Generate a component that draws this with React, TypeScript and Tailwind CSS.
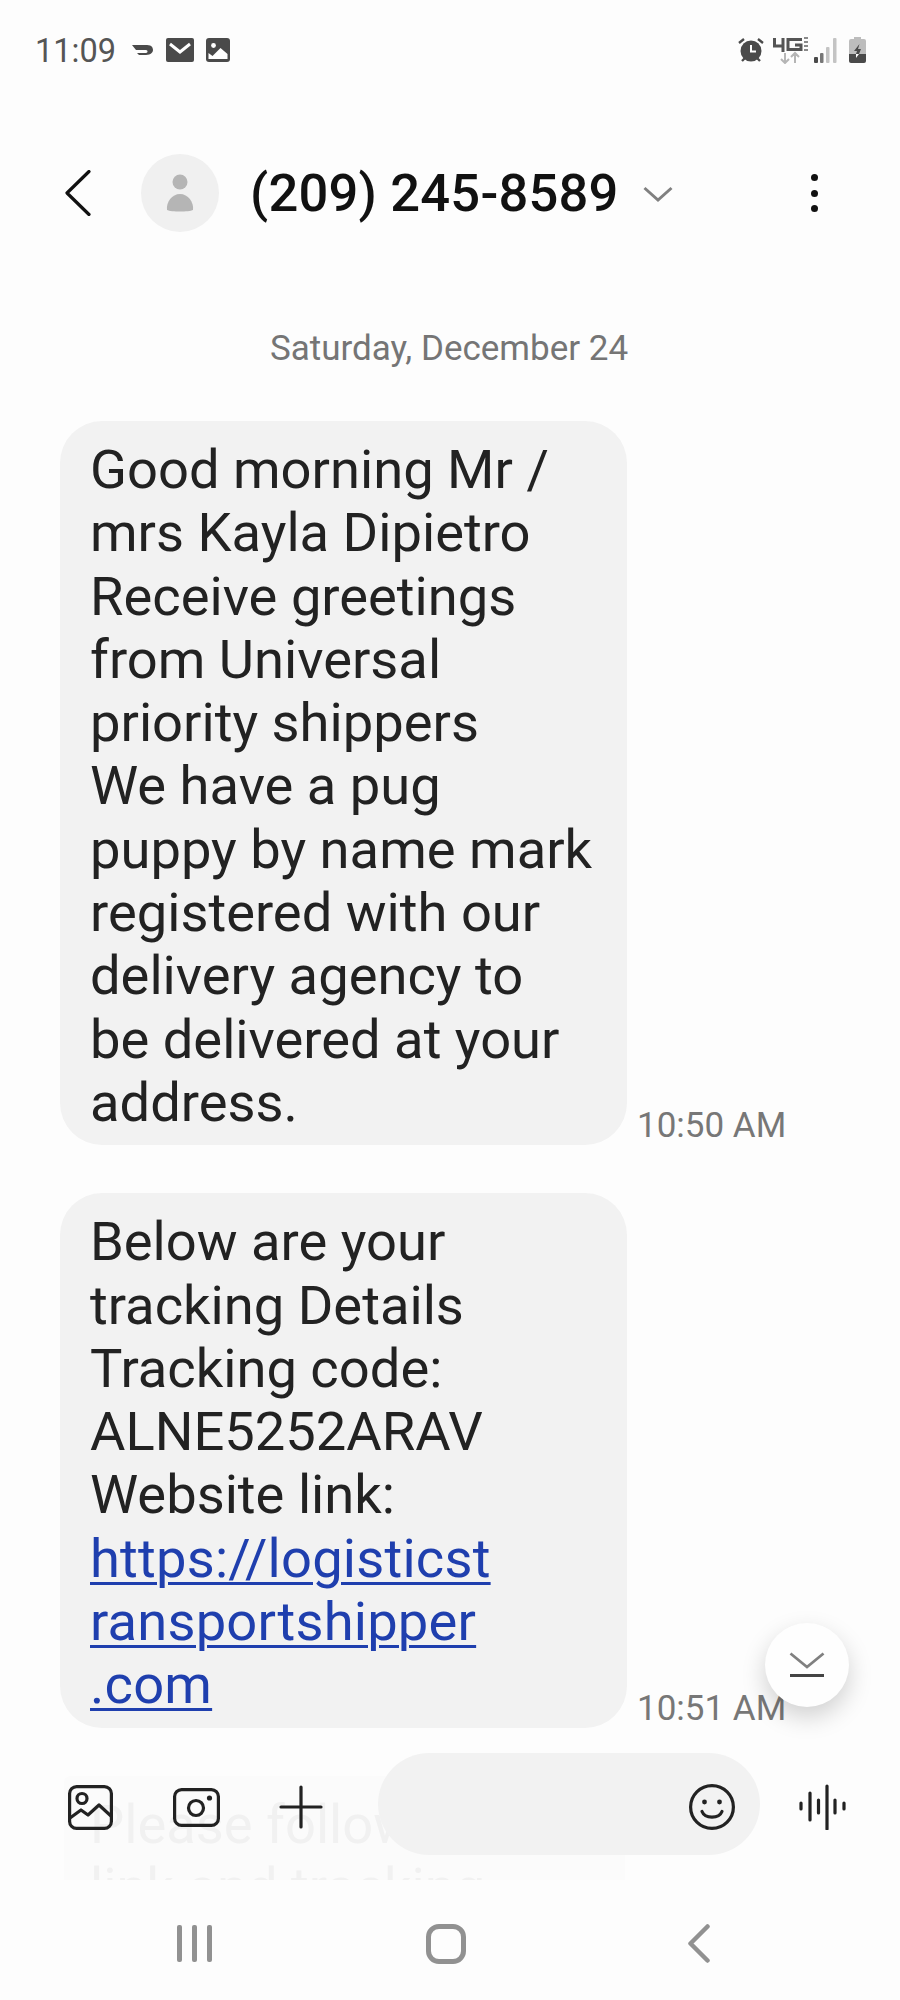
const FONT = "font-['Roboto','Liberation_Sans',sans-serif]";

function Row({ lines }: { lines: string[] }) {
  return (
    <>
      {lines.map((l) => (
        <div key={l}>{l}</div>
      ))}
    </>
  );
}

function Message({ lines, link, time }: { lines: string[]; link?: string[]; time: string }) {
  return (
    <div className="flex items-end">
      <div className="w-[567px] rounded-[42px] bg-[#f2f2f2] pl-[30px] pr-[20px] pt-[17px] pb-[11px] text-[54.3px] leading-[63.3px] text-[#222222]">
        <Row lines={lines} />
        {link && (
          <div className="text-[#1f3fae] underline decoration-[3px] underline-offset-[5px] tracking-[0.2px]">
            <Row lines={link} />
          </div>
        )}
      </div>
      <span className="ml-[10px] mb-[-1px] text-[35px] leading-[40px] text-[#777777]">{time}</span>
    </div>
  );
}

function StatusBar() {
  return (
    <div className="flex h-[100px] items-center pl-[35px] pr-[34px]">
      <span className="mt-[1px] text-[32.5px] leading-[38px] text-[#555555]">11:09</span>
      <svg className="ml-[15px]" width="24" height="14" viewBox="0 0 24 14" fill="none">
        <path d="M1 2h15c5 0 6 3 6 5s-2 5-7 5H8l-2-2h9c2 0 2-3 0-3H5Z" fill="#4a4a4a" />
      </svg>
      <svg className="ml-[11px]" width="28" height="24" viewBox="0 0 28 24">
        <rect width="28" height="24" rx="2" fill="#4a4a4a" />
        <path d="M4 6l10 8 10-8" stroke="#fff" strokeWidth="3" fill="none" />
      </svg>
      <svg className="ml-[12px]" width="24" height="24" viewBox="0 0 24 24">
        <rect width="24" height="24" rx="3" fill="#4a4a4a" />
        <circle cx="7.5" cy="7.5" r="2.4" fill="#fff" />
        <path d="M2.5 21v-6l4 3 8-8 7 6v5Z" fill="#fff" />
      </svg>
      <div className="flex-1" />
      <svg width="26" height="26" viewBox="0 0 26 26">
        <circle cx="13" cy="14" r="10.5" fill="#4a4a4a" />
        <path d="M13 8v6.5h5" stroke="#fff" strokeWidth="2" fill="none" />
        <path d="M1 6l5-4M25 6l-5-4M4 24l3-3M22 24l-3-3" stroke="#4a4a4a" strokeWidth="2.4" />
      </svg>
      <svg className="ml-[8px]" width="36" height="27" viewBox="0 0 36 27">
        <path d="M2.500 1v8h10M11 1v14" stroke="#555555" strokeWidth="3" fill="none" />
        <path d="M30 2.500H16v10h13V8h-6" stroke="#555555" strokeWidth="3" fill="none" />
        <path d="M32 1h4M32 5h4M32 9h4M32 13h4" stroke="#8a8a8a" strokeWidth="1.800" />
        <path d="M13 16v10M9 22l4 4 4-4M23 26V16M19 20l4-4 4 4" stroke="#b5b5b5" strokeWidth="2" fill="none" />
      </svg>
      <svg className="ml-[6px]" width="23" height="25" viewBox="0 0 23 25">
        <rect x="0" y="19" width="4" height="6" rx="1" fill="#4a4a4a" />
        <rect x="6" y="15" width="3.500" height="10" rx="1" fill="#777777" />
        <rect x="12" y="9" width="3.500" height="16" rx="1" fill="#c4c4c4" />
        <rect x="19" y="0" width="3.500" height="25" rx="1" fill="#c4c4c4" />
      </svg>
      <svg className="ml-[12px]" width="17" height="26" viewBox="0 0 17 26">
        <path d="M5 0h7v2h3a2 2 0 0 1 2 2v13H0V4a2 2 0 0 1 2-2h3Z" fill="#bdbdbd" />
        <path d="M0 17h17v7a2 2 0 0 1-2 2H2a2 2 0 0 1-2-2Z" fill="#4a4a4a" />
        <path d="M10.500 7 5 14h3l-1 3h3l2-5H9Z" fill="#4a4a4a" />
        <path d="M7 17h3l-3 4Z" fill="#fff" />
      </svg>
    </div>
  );
}

function Header() {
  return (
    <div className="flex h-[86px] items-center pl-[65px] mt-[50px]">
      <svg width="26" height="46" viewBox="0 0 26 46" fill="none">
        <path d="M24 1.500 2 23l22 21.500" stroke="#111111" strokeWidth="3.200" strokeLinecap="round" strokeLinejoin="round" />
      </svg>
      <div className="ml-[50px] flex h-[78px] w-[78px] items-center justify-center rounded-full bg-[#f0f0f0]">
        <svg width="28" height="38" viewBox="0 0 28 38">
          <circle cx="14" cy="8" r="7.500" fill="#b5b5b5" />
          <path d="M1 36c-1-8 5-16 13-16s14 8 13 16c-4 2-22 2-26 0Z" fill="#b5b5b5" />
        </svg>
      </div>
      <span className="ml-[31px] text-[52.5px] font-medium leading-[60px] text-[#111111] tracking-[0.2px]">(209) 245-8589</span>
      <svg className="ml-[24px] mt-[2px]" width="30" height="17" viewBox="0 0 30 17" fill="none">
        <path d="M1.500 2 15 14 28.500 2" stroke="#808080" strokeWidth="3" />
      </svg>
      <div className="ml-[138px] flex flex-col gap-[8.500px]">
        <span className="h-[7px] w-[7px] rounded-full bg-[#111111]" />
        <span className="h-[7px] w-[7px] rounded-full bg-[#111111]" />
        <span className="h-[7px] w-[7px] rounded-full bg-[#111111]" />
      </div>
    </div>
  );
}

function ComposeBar() {
  return (
    <div className="absolute left-0 top-[1753px] flex h-[102px] w-[900px] items-center">
      <svg className="ml-[68px] mt-[6px]" width="45" height="45" viewBox="0 0 45 45" fill="none" stroke="#222222" strokeWidth="3.200">
        <rect x="1.600" y="1.600" width="41.800" height="41.800" rx="7" />
        <circle cx="14" cy="13.500" r="5" />
        <path d="M2 33l11-8 7 5 11-10 12 11" strokeLinejoin="round" />
      </svg>
      <svg className="ml-[60px] mt-[6px]" width="47" height="39" viewBox="0 0 47 39" fill="none" stroke="#222222" strokeWidth="3.200">
        <rect x="1.600" y="1.600" width="43.800" height="35.800" rx="7" />
        <circle cx="23" cy="20" r="7.500" />
        <circle cx="36.500" cy="10" r="2.600" fill="#222222" stroke="none" />
      </svg>
      <svg className="ml-[59px] mt-[6px]" width="44" height="44" viewBox="0 0 44 44" fill="none" stroke="#222222" strokeWidth="3.200" strokeLinecap="round">
        <path d="M22 2v40M2 22h40" />
      </svg>
      <div className="ml-[55px] flex h-[102px] w-[382px] items-center justify-end rounded-full bg-[#f2f2f2] pr-[25px] pt-[6px]">
        <svg width="46" height="46" viewBox="0 0 46 46" fill="none" stroke="#222222" strokeWidth="3.200">
          <circle cx="23" cy="23" r="21.400" />
          <circle cx="15.500" cy="18" r="2.400" fill="#222222" stroke="none" />
          <circle cx="30.500" cy="18" r="2.400" fill="#222222" stroke="none" />
          <path d="M13 27.500c3 7.500 17 7.500 20 0" strokeLinecap="round" />
        </svg>
      </div>
      <svg className="ml-[39px] mt-[6px]" width="48" height="46" viewBox="0 0 48 46" fill="none" stroke="#222222" strokeWidth="3.200" strokeLinecap="round">
        <path d="M2 19v6M11 9v27M19.500 16v13M28 2v43M36 16v13M45 19v6" />
      </svg>
    </div>
  );
}

function ScrollButton() {
  return (
    <div className="absolute left-[765px] top-[1623px] flex h-[84px] w-[84px] items-center justify-center rounded-full bg-[#fefefe] shadow-[0_10px_24px_rgba(0,0,0,0.18)]">
      <svg width="36" height="26" viewBox="0 0 36 26" fill="none">
        <path d="M1.500 1.500 18 15 34.500 1.500" stroke="#808080" strokeWidth="2.800" />
        <path d="M1 23.500h34" stroke="#444444" strokeWidth="3.200" />
      </svg>
    </div>
  );
}

function NavBar() {
  return (
    <div className="flex h-[120px] items-start pt-[44px] pl-[177px]">
      <div className="mt-[1px] flex gap-[10px]">
        <span className="h-[37px] w-[5px] rounded-[2px] bg-[#919191]" />
        <span className="h-[37px] w-[5px] rounded-[2px] bg-[#919191]" />
        <span className="h-[37px] w-[5px] rounded-[2px] bg-[#919191]" />
      </div>
      <div className="ml-[214px] h-[40px] w-[40px] rounded-[13px] border-[5px] border-[#919191]" />
      <svg className="ml-[221px]" width="23" height="39" viewBox="0 0 23 39" fill="none">
        <path d="M20.500 2.500 3.500 19.500l17 17" stroke="#919191" strokeWidth="4.500" strokeLinecap="round" strokeLinejoin="round" />
      </svg>
    </div>
  );
}

export default function App() {
  return (
    <div className={`relative h-[2000px] w-[900px] overflow-hidden bg-[#fdfdfd] ${FONT}`}>
      <div className="h-[1880px] overflow-hidden">
        <StatusBar />
        <Header />
        <div className="mt-[93px] pl-[270px] text-[35px] leading-[40px] text-[#757575]">Saturday, December 24</div>
        <div className="mt-[52px] flex flex-col gap-[48px] pl-[60px]">
          <Message
            lines={[
              "Good morning Mr /",
              "mrs Kayla Dipietro",
              "Receive greetings",
              "from Universal",
              "priority shippers",
              "We have a pug",
              "puppy by name mark",
              "registered with our",
              "delivery agency to",
              "be delivered at your",
              "address.",
            ]}
            time="10:50 AM"
          />
          <Message
            lines={["Below are your", "tracking Details", "Tracking code:", "ALNE5252ARAV", "Website link:"]}
            link={["https://logisticst", "ransportshipper", ".com"]}
            time="10:51 AM"
          />
          <div className="ml-[4px] w-[561px] rounded-t-[6px] bg-[#fbfbfb] pl-[26px] pr-[20px] pt-[17px] pb-[11px] text-[54.3px] leading-[63.3px] text-[#f1f1f1]">
            <div>Please follow the</div>
            <div>link and tracking</div>
          </div>
        </div>
      </div>
      <NavBar />
      <ScrollButton />
      <ComposeBar />
    </div>
  );
}
